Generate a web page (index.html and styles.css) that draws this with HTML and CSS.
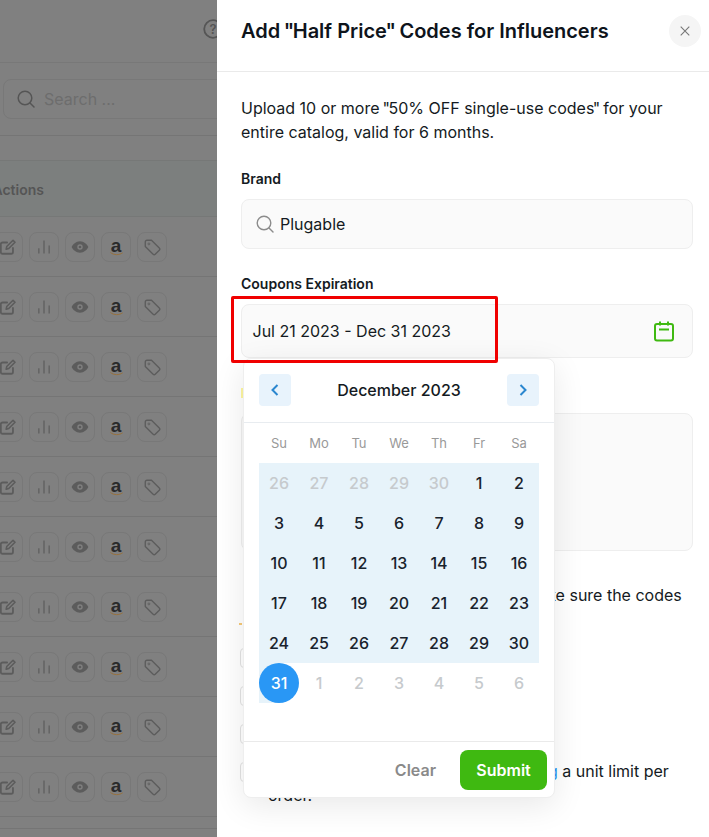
FILE: index.html
```html
<!DOCTYPE html>
<html lang="en">
<head>
<meta charset="UTF-8" />
<meta name="viewport" content="width=device-width, initial-scale=1.0" />
<title>Add Half Price Codes</title>
<link rel="stylesheet" href="styles.css">
</head>
<body>

<svg class="icon-defs" width="0" height="0">
  <symbol id="i-edit" viewBox="0 0 20 20">
    <path d="M15.500 11v4.500a2 2 0 0 1-2 2H4a2 2 0 0 1-2-2V7a2 2 0 0 1 2-2h5" fill="none" stroke="currentColor" stroke-width="2" stroke-linecap="round"/>
    <path d="M8 12.500l.6-3L15.600 2.500l2.200 2.200-7 7z" fill="none" stroke="currentColor" stroke-width="1.800" stroke-linejoin="round"/>
  </symbol>
  <symbol id="i-bars" viewBox="0 0 20 20">
    <path d="M3.500 18v-6.500M10 18V2M16.500 18V8" fill="none" stroke="currentColor" stroke-width="2"/>
  </symbol>
  <symbol id="i-eye" viewBox="0 0 20 20">
    <path fill-rule="evenodd" fill="currentColor" d="M10 3.600c4.600 0 8 3.500 9.300 6.400-1.300 2.900-4.700 6.400-9.300 6.400S2 12.900.7 10C2 7.100 5.400 3.600 10 3.600zm0 3.400a3 3 0 1 0 0 6 3 3 0 0 0 0-6z"/>
    <circle cx="10" cy="10" r="1.500" fill="currentColor"/>
  </symbol>
  <symbol id="i-tag" viewBox="0 0 20 20">
    <path d="M1.500 3.500a2 2 0 0 1 2-2h5.300l9.200 9.200a1.800 1.800 0 0 1 0 2.500l-4.800 4.800a1.800 1.800 0 0 1-2.500 0L1.500 8.800z" fill="none" stroke="currentColor" stroke-width="1.600" stroke-linejoin="round"/>
    <circle cx="5.800" cy="5.800" r="1.100" fill="none" stroke="currentColor"/>
  </symbol>
  <symbol id="i-smile" viewBox="0 0 20 6">
    <path d="M1 1c5 4 13 4 18 .5" fill="none" stroke="currentColor" stroke-width="1.100" stroke-linecap="round"/>
  </symbol>
</svg>

<div class="page">
  <div class="behind">
    <div class="topbar">
      <svg class="help" width="20" height="20" viewBox="0 0 20 20">
        <circle cx="10" cy="10" r="8.800" fill="none" stroke="currentColor" stroke-width="1.800"/>
        <text x="10" y="14.500" text-anchor="middle" class="help-mark">?</text>
      </svg>
    </div>
    <div class="searchbar">
      <div class="searchbox">
        <svg width="18" height="18" viewBox="0 0 18 18">
          <circle cx="8" cy="8" r="6.800" fill="none" stroke="currentColor" stroke-width="1.500"/>
          <path d="M13 13l4 4" stroke="currentColor" stroke-width="1.500" stroke-linecap="round"/>
        </svg>
        <span>Search ...</span>
      </div>
    </div>
    <div class="spacer"></div>
    <div class="thead">Actions</div>

    <div class="row">
      <span class="act"><svg width="18" height="18"><use href="#i-edit"/></svg></span>
      <span class="act light"><svg width="16" height="16"><use href="#i-bars"/></svg></span>
      <span class="act"><svg width="18" height="18"><use href="#i-eye"/></svg></span>
      <span class="act"><span class="az">a<svg width="13" height="4"><use href="#i-smile"/></svg></span></span>
      <span class="act"><svg width="17" height="17"><use href="#i-tag"/></svg></span>
    </div>
    <div class="row">
      <span class="act"><svg width="18" height="18"><use href="#i-edit"/></svg></span>
      <span class="act light"><svg width="16" height="16"><use href="#i-bars"/></svg></span>
      <span class="act"><svg width="18" height="18"><use href="#i-eye"/></svg></span>
      <span class="act"><span class="az">a<svg width="13" height="4"><use href="#i-smile"/></svg></span></span>
      <span class="act"><svg width="17" height="17"><use href="#i-tag"/></svg></span>
    </div>
    <div class="row">
      <span class="act"><svg width="18" height="18"><use href="#i-edit"/></svg></span>
      <span class="act light"><svg width="16" height="16"><use href="#i-bars"/></svg></span>
      <span class="act"><svg width="18" height="18"><use href="#i-eye"/></svg></span>
      <span class="act"><span class="az">a<svg width="13" height="4"><use href="#i-smile"/></svg></span></span>
      <span class="act"><svg width="17" height="17"><use href="#i-tag"/></svg></span>
    </div>
    <div class="row">
      <span class="act"><svg width="18" height="18"><use href="#i-edit"/></svg></span>
      <span class="act light"><svg width="16" height="16"><use href="#i-bars"/></svg></span>
      <span class="act"><svg width="18" height="18"><use href="#i-eye"/></svg></span>
      <span class="act"><span class="az">a<svg width="13" height="4"><use href="#i-smile"/></svg></span></span>
      <span class="act"><svg width="17" height="17"><use href="#i-tag"/></svg></span>
    </div>
    <div class="row">
      <span class="act"><svg width="18" height="18"><use href="#i-edit"/></svg></span>
      <span class="act light"><svg width="16" height="16"><use href="#i-bars"/></svg></span>
      <span class="act"><svg width="18" height="18"><use href="#i-eye"/></svg></span>
      <span class="act"><span class="az">a<svg width="13" height="4"><use href="#i-smile"/></svg></span></span>
      <span class="act"><svg width="17" height="17"><use href="#i-tag"/></svg></span>
    </div>
    <div class="row">
      <span class="act"><svg width="18" height="18"><use href="#i-edit"/></svg></span>
      <span class="act light"><svg width="16" height="16"><use href="#i-bars"/></svg></span>
      <span class="act"><svg width="18" height="18"><use href="#i-eye"/></svg></span>
      <span class="act"><span class="az">a<svg width="13" height="4"><use href="#i-smile"/></svg></span></span>
      <span class="act"><svg width="17" height="17"><use href="#i-tag"/></svg></span>
    </div>
    <div class="row">
      <span class="act"><svg width="18" height="18"><use href="#i-edit"/></svg></span>
      <span class="act light"><svg width="16" height="16"><use href="#i-bars"/></svg></span>
      <span class="act"><svg width="18" height="18"><use href="#i-eye"/></svg></span>
      <span class="act"><span class="az">a<svg width="13" height="4"><use href="#i-smile"/></svg></span></span>
      <span class="act"><svg width="17" height="17"><use href="#i-tag"/></svg></span>
    </div>
    <div class="row">
      <span class="act"><svg width="18" height="18"><use href="#i-edit"/></svg></span>
      <span class="act light"><svg width="16" height="16"><use href="#i-bars"/></svg></span>
      <span class="act"><svg width="18" height="18"><use href="#i-eye"/></svg></span>
      <span class="act"><span class="az">a<svg width="13" height="4"><use href="#i-smile"/></svg></span></span>
      <span class="act"><svg width="17" height="17"><use href="#i-tag"/></svg></span>
    </div>
    <div class="row">
      <span class="act"><svg width="18" height="18"><use href="#i-edit"/></svg></span>
      <span class="act light"><svg width="16" height="16"><use href="#i-bars"/></svg></span>
      <span class="act"><svg width="18" height="18"><use href="#i-eye"/></svg></span>
      <span class="act"><span class="az">a<svg width="13" height="4"><use href="#i-smile"/></svg></span></span>
      <span class="act"><svg width="17" height="17"><use href="#i-tag"/></svg></span>
    </div>
    <div class="row">
      <span class="act"><svg width="18" height="18"><use href="#i-edit"/></svg></span>
      <span class="act light"><svg width="16" height="16"><use href="#i-bars"/></svg></span>
      <span class="act"><svg width="18" height="18"><use href="#i-eye"/></svg></span>
      <span class="act"><span class="az">a<svg width="13" height="4"><use href="#i-smile"/></svg></span></span>
      <span class="act"><svg width="17" height="17"><use href="#i-tag"/></svg></span>
    </div>
    <div class="pager-line"></div>
  </div>

  <div class="drawer">
    <div class="drawer-head">
      <h1>Add <span class="q">"</span>Half Price<span class="q">"</span> Codes for Influencers</h1>
      <button class="close" type="button">
        <svg width="10" height="10" viewBox="0 0 10 10"><path d="M.7.7l8.600 8.600M9.300.7L.7 9.300" stroke="currentColor" stroke-width="1.100"/></svg>
      </button>
    </div>

    <div class="drawer-body">
      <p class="intro">Upload 10 or more <span class="q">"</span>50% OFF single-use codes<span class="q">"</span> for your entire catalog, valid for 6 months.</p>

      <label class="field-label">Brand</label>
      <div class="input brand">
        <svg width="18" height="18" viewBox="0 0 18 18">
          <circle cx="8" cy="8" r="6.800" fill="none" stroke="currentColor" stroke-width="1.400"/>
          <path d="M13 13l4 4" stroke="currentColor" stroke-width="1.400" stroke-linecap="round"/>
        </svg>
        <span>Plugable</span>
      </div>

      <label class="field-label">Coupons Expiration</label>
      <div class="date-wrap">
        <div class="input date">
          <span>Jul 21 2023 - Dec 31 2023</span>
          <svg class="cal-icon" width="22" height="22" viewBox="0 0 22 22">
            <rect x="2" y="4" width="18" height="16.500" rx="2" fill="none" stroke="currentColor" stroke-width="2"/>
            <path d="M7 1.500v4M15 1.500v4M6 9.500h10" stroke="currentColor" stroke-width="2" fill="none"/>
          </svg>
        </div>

        <div class="picker">
          <div class="picker-head">
            <button class="nav" type="button">
              <svg width="8" height="12" viewBox="0 0 8 12"><path d="M6.500 1L1.500 6l5 5" fill="none" stroke="currentColor" stroke-width="2"/></svg>
            </button>
            <span class="month">December 2023</span>
            <button class="nav" type="button">
              <svg width="8" height="12" viewBox="0 0 8 12"><path d="M1.500 1l5 5-5 5" fill="none" stroke="currentColor" stroke-width="2"/></svg>
            </button>
          </div>
          <div class="days">
            <div class="weekdays">
              <span>Su</span><span>Mo</span><span>Tu</span><span>We</span><span>Th</span><span>Fr</span><span>Sa</span>
            </div>
            <div class="dates">
              <span class="in out">26</span><span class="in out">27</span><span class="in out">28</span><span class="in out">29</span><span class="in out">30</span><span class="in">1</span><span class="in">2</span>
              <span class="in">3</span><span class="in">4</span><span class="in">5</span><span class="in">6</span><span class="in">7</span><span class="in">8</span><span class="in">9</span>
              <span class="in">10</span><span class="in">11</span><span class="in">12</span><span class="in">13</span><span class="in">14</span><span class="in">15</span><span class="in">16</span>
              <span class="in">17</span><span class="in">18</span><span class="in">19</span><span class="in">20</span><span class="in">21</span><span class="in">22</span><span class="in">23</span>
              <span class="in">24</span><span class="in">25</span><span class="in">26</span><span class="in">27</span><span class="in">28</span><span class="in">29</span><span class="in">30</span>
              <span class="end"><b>31</b></span><span class="out">1</span><span class="out">2</span><span class="out">3</span><span class="out">4</span><span class="out">5</span><span class="out">6</span>
            </div>
          </div>
          <div class="picker-foot">
            <button class="clear" type="button">Clear</button>
            <button class="submit" type="button">Submit</button>
          </div>
        </div>

        <div class="callout"></div>
      </div>

      <label class="field-label"><span class="mark"></span>Codes</label>
      <div class="input codes"></div>

      <p class="note">Before you upload the codes, please make sure the codes<br><span class="dot"></span>will work.</p>

      <ul class="checks">
        <li><span class="box"></span>Codes are single use</li>
        <li><span class="box"></span>Codes apply to all products</li>
        <li><span class="box"></span>Codes are valid for 6 months</li>
        <li><span class="box"></span><span>Codes were all created without <a href="#">setting</a> a unit limit per order.</span></li>
      </ul>
    </div>
  </div>
</div>

</body>
</html>
```

FILE: styles.css
```css
* {
  box-sizing: border-box;
}

html, body {
  margin: 0;
  height: 100%;
  overflow: hidden;
}

body {
  font-family: 'Inter', 'Liberation Sans', sans-serif;
  font-size: 16px;
  line-height: 24px;
  color: #141a22;
  background: #fff;
}

.icon-defs {
  position: absolute;
}

.page {
  display: flex;
  height: 837px;
}

/* the dimmed page under the drawer */
.behind {
  width: 217px;
  flex: none;
  overflow: hidden;
  background: #808080;
  color: #5a5a5a;
}

.topbar {
  height: 63px;
  display: flex;
  justify-content: flex-end;
  align-items: center;
  padding-top: 1px;
  padding-bottom: 6px;
  border-bottom: 1px solid #787878;
}

.help {
  flex: none;
  margin-right: -6px;
  color: #555;
}

.help-mark {
  font-size: 13px;
  font-weight: 600;
  fill: #555;
}

.searchbar {
  height: 73px;
  padding: 16px 0 0 3px;
  border-bottom: 1px solid #757575;
}

.searchbox {
  width: 260px;
  height: 40px;
  display: flex;
  align-items: center;
  gap: 9px;
  padding-left: 13px;
  border: 1px solid #787878;
  border-radius: 8px;
  color: #555;
}

.searchbox span {
  color: #6d6d6d;
}

.spacer {
  height: 24px;
}

.thead {
  height: 57px;
  display: flex;
  justify-content: flex-end;
  align-items: center;
  padding: 2px 173px 0 0;
  background: #7c7f7e;
  border-top: 1px solid #767877;
  border-bottom: 1px solid #767877;
  font-size: 14px;
  font-weight: 600;
  white-space: nowrap;
  color: #555;
}

.row {
  height: 60px;
  display: flex;
  justify-content: flex-end;
  gap: 6px;
  padding: 15px 50px 0 0;
  border-bottom: 1px solid #757575;
}

.act {
  flex: none;
  width: 30px;
  height: 30px;
  display: flex;
  justify-content: center;
  align-items: center;
  border: 1px solid #787878;
  border-radius: 8px;
  color: #5c5c5c;
}

.act.light {
  color: #656565;
}

.az {
  display: flex;
  flex-direction: column;
  align-items: center;
  font-family: 'Liberation Sans', sans-serif;
  font-size: 19px;
  font-weight: 700;
  line-height: 13px;
  color: #2a2a2a;
}

.az svg {
  color: #a06b22;
}

.pager-line {
  height: 12px;
  border-bottom: 1px solid #757575;
}

/* drawer */
.drawer {
  flex: 1;
  min-width: 0;
  background: #fff;
}

.drawer-head {
  height: 72px;
  display: flex;
  justify-content: space-between;
  padding: 15px 8px 0 24px;
  border-bottom: 1px solid #eaeaea;
}

.drawer-head h1 {
  margin: 0;
  font-size: 20px;
  line-height: 32px;
  font-weight: 600;
  color: #0e141b;
}

/* straight quotes run narrower in the design */
.q {
  margin-left: -1.500px;
  letter-spacing: -1.500px;
}

.close {
  width: 32px;
  height: 32px;
  padding: 0;
  display: flex;
  justify-content: center;
  align-items: center;
  border: none;
  border-radius: 50%;
  background: #f5f5f5;
  color: #777;
}

.drawer-body {
  padding: 24px 16px 0 24px;
}

.intro {
  margin: 0 0 25px;
}

.field-label {
  display: block;
  height: 20px;
  margin-bottom: 10px;
  font-size: 14px;
  line-height: 20px;
  font-weight: 600;
}

.mark {
  display: inline-block;
  width: 14px;
  height: 10px;
  margin-right: 4px;
  background: #fdf6a0;
}

.input {
  border: 1px solid #eeeeee;
  border-radius: 8px;
  background: #fafafa;
  display: flex;
  align-items: center;
}

.brand {
  height: 50px;
  margin-bottom: 25px;
  gap: 6px;
  padding-left: 14px;
}

.brand svg {
  color: #8c8c8c;
}

.date-wrap {
  position: relative;
  margin-bottom: 25px;
}

.date {
  height: 54px;
  justify-content: space-between;
  padding: 0 17px 0 10.500px;
}

.cal-icon {
  color: #3fb911;
}

.codes {
  height: 138px;
  margin-bottom: 32px;
}

.callout {
  position: absolute;
  left: -10px;
  top: -8px;
  width: 267px;
  height: 67px;
  border: 3px solid #f00000;
  border-radius: 2px;
  z-index: 3;
}

/* date picker */
.picker {
  position: absolute;
  left: 2px;
  top: 54px;
  width: 312px;
  height: 440px;
  display: flex;
  flex-direction: column;
  background: #fff;
  border: 1px solid #eeeeee;
  border-radius: 8px;
  box-shadow: 0 8px 32px rgba(0, 0, 0, 0.09);
  z-index: 2;
}

.picker-head {
  height: 64px;
  flex: none;
  display: flex;
  justify-content: space-between;
  align-items: center;
  padding: 0 15px 1px;
  border-bottom: 1px solid #e8ecf0;
}

.month {
  font-weight: 500;
}

.nav {
  width: 32px;
  height: 32px;
  padding: 0;
  display: flex;
  justify-content: center;
  align-items: center;
  border: none;
  border-radius: 4px;
  background: #e8f3fc;
  color: #2a86cf;
}

.days {
  flex: 1;
  padding: 0 15px;
}

.weekdays, .dates {
  display: grid;
  grid-template-columns: repeat(7, 40px);
}

.weekdays span {
  height: 40px;
  display: flex;
  justify-content: center;
  align-items: center;
  font-size: 13px;
  color: #999;
}

.dates span {
  height: 40px;
  display: flex;
  justify-content: center;
  align-items: center;
  font-weight: 500;
  color: #18222c;
}

.dates .in {
  background: #e7f3fa;
}

.dates .out {
  color: #c6cacd;
}

.dates .end {
  background: linear-gradient(to right, #e7f3fa 50%, #fff 50%);
}

.end b {
  width: 40px;
  height: 40px;
  display: flex;
  justify-content: center;
  align-items: center;
  border-radius: 50%;
  background: #2997f5;
  color: #fff;
  font-weight: 500;
}

.picker-foot {
  height: 56px;
  flex: none;
  display: flex;
  justify-content: flex-end;
  align-items: flex-start;
  gap: 24px;
  padding: 8px 7px 0 0;
  border-top: 1px solid #eaeaea;
}

.clear, .submit {
  font-family: inherit;
  font-size: 16px;
  font-weight: 600;
  border: none;
  padding: 0;
  height: 40px;
}

.clear {
  background: none;
  color: #8a8a8a;
}

.submit {
  width: 87px;
  border-radius: 8px;
  background: #3fb911;
  color: #fff;
}

/* mostly covered by the picker */
.note {
  margin: 0 0 14px;
  text-indent: 2px;
}

.dot {
  display: inline-block;
  width: 3px;
  height: 2px;
  margin: 0 4px 0 -2px;
  background: #f5c877;
}

.checks {
  margin: 0;
  padding: 0;
  list-style: none;
  display: flex;
  flex-direction: column;
  gap: 14px;
}

.checks li {
  display: flex;
  gap: 8px;
}

.box {
  flex: none;
  width: 20px;
  height: 20px;
  margin: 3px 0 0 -1px;
  border: 1px solid #e2e2e2;
  border-radius: 4px;
}

.checks a {
  color: #2997f5;
  text-decoration: none;
}
```
